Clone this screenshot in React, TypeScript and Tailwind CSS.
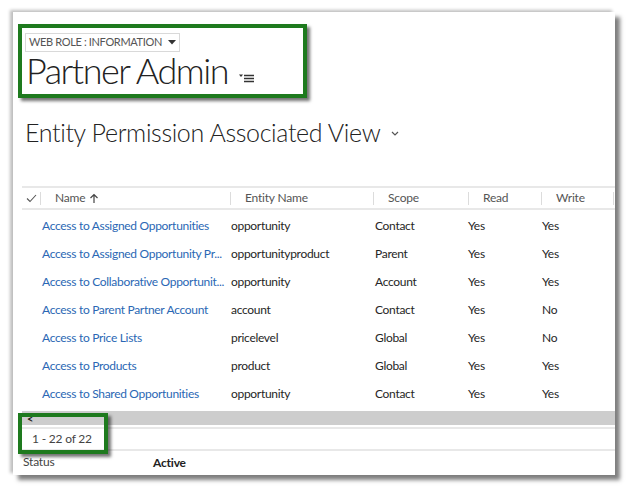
import React from "react";

const rows = [
  ["Access to Assigned Opportunities", "opportunity", "Contact", "Yes", "Yes"],
  ["Access to Assigned Opportunity Pr...", "opportunityproduct", "Parent", "Yes", "Yes"],
  ["Access to Collaborative Opportunit...", "opportunity", "Account", "Yes", "Yes"],
  ["Access to Parent Partner Account", "account", "Contact", "Yes", "No"],
  ["Access to Price Lists", "pricelevel", "Global", "Yes", "No"],
  ["Access to Products", "product", "Global", "Yes", "Yes"],
  ["Access to Shared Opportunities", "opportunity", "Contact", "Yes", "Yes"],
];

const grid = "grid grid-cols-[18px_190px_143px_95px_73px_72px_60px]";

function HeadCell({ label, arrow }: { label: string; arrow?: boolean }) {
  return (
    <div className="flex items-center h-full">
      <div className="w-px h-[13px] bg-[#dcdcdc]" />
      <span className="ml-[14px] text-[12px] tracking-[-0.2px] text-[#555]">{label}</span>
      {arrow && (
        <svg width="10" height="11" viewBox="0 0 10 11" className="ml-[4px]">
          <path d="M5 10V1.5M1.5 5L5 1.5L8.5 5" stroke="#444" strokeWidth="1.2" fill="none" />
        </svg>
      )}
    </div>
  );
}

export default function App() {
  return (
    <div
      className="w-[628px] h-[487px] bg-white overflow-hidden pt-[12px] pl-[13px]"
      style={{ fontFamily: "Lato, 'Open Sans', sans-serif" }}
    >
      <div className="relative w-[602px] h-[463px] bg-white overflow-hidden shadow-[5px_5px_4px_rgba(0,0,0,0.5),-3px_-2px_3px_rgba(0,0,0,0.25)]">
        {/* Header box */}
        <div className="ml-[5px] mt-[12px] w-[289px] h-[74px] border-[4px] border-[#1e7a1e] shadow-[3px_3px_3px_rgba(0,0,0,0.55)] pl-[3px] pt-[5px]">
          <div className="flex items-center w-[155px] h-[19px] border border-[#d9d9d9] pl-[3px] whitespace-nowrap">
            <span className="text-[11px] text-[#555] tracking-[-0.35px]">WEB ROLE : INFORMATION</span>
            <svg width="8" height="5" viewBox="0 0 8 5" className="ml-[6px] shrink-0">
              <path d="M0 0H8L4 4.5Z" fill="#333" />
            </svg>
          </div>
          <div className="flex items-end h-[36px] pl-[1px]">
            <span className="text-[36px] leading-[36px] font-light text-[#222] tracking-[-1.5px]">
              Partner Admin
            </span>
            <svg width="15" height="10" viewBox="0 0 15 10" className="ml-[11px] mb-[4px]">
              <path d="M0 0.5H4L2 3Z" fill="#333" />
              <path d="M5 1.5H15M5 4.5H15M5 7.5H15" stroke="#333" strokeWidth="1.4" />
            </svg>
          </div>
        </div>

        {/* View title */}
        <div className="flex items-center ml-[12px] mt-[21px] h-[26px]">
          <span className="text-[25px] leading-[26px] font-light text-[#222] tracking-[-0.35px]">
            Entity Permission Associated View
          </span>
          <svg width="8" height="5" viewBox="0 0 8 5" className="ml-[11px] mt-[2px]">
            <path d="M1 1L4 4L7 1" stroke="#555" strokeWidth="1.2" fill="none" />
          </svg>
        </div>

        {/* Table */}
        <div className="ml-[9px] mt-[41px] w-[620px]">
          <div className={`${grid} h-[24px] border-t-2 border-b-2 border-[#e8e8e8]`}>
            <div className="flex items-center justify-center">
              <svg width="11" height="9" viewBox="0 0 11 9">
                <path d="M1 4.5L4 7.5L10 1" stroke="#555" strokeWidth="1.1" fill="none" />
              </svg>
            </div>
            <HeadCell label="Name" arrow />
            <HeadCell label="Entity Name" />
            <HeadCell label="Scope" />
            <HeadCell label="Read" />
            <HeadCell label="Write" />
            <HeadCell label="" />
          </div>
          {rows.map((r, i) => (
            <div
              key={i}
              className={`${grid} h-[28px] pt-[3px] items-center text-[12px] tracking-[-0.3px] text-[#262626]`}
            >
              <div />
              <div className="pl-[2px] text-[#2a67b4] whitespace-nowrap overflow-hidden">{r[0]}</div>
              <div className="pl-[1px]">{r[1]}</div>
              <div className="pl-[2px]">{r[2]}</div>
              <div>{r[3]}</div>
              <div className="pl-[1px]">{r[4]}</div>
              <div />
            </div>
          ))}
          <div className="mt-[5px] h-[14px] bg-[#cdcdcd] flex items-center">
            <span className="ml-[5px] text-[11px] leading-none text-[#222] font-bold">&lt;</span>
          </div>
          <div className="mt-[2px] h-[24px] border-t-2 border-b-2 border-[#e8e8e8] flex items-center">
            <span className="ml-[10px] text-[12px] tracking-[-0.2px] text-[#444]">1 - 22 of 22</span>
          </div>
          <div className="flex items-center h-[24px] text-[12px] tracking-[-0.2px]">
            <span className="w-[130px] ml-[1px] text-[#444] -mt-[2px]">Status</span>
            <span className="font-bold text-[#222]">Active</span>
          </div>
        </div>

        {/* Annotation box */}
        <div className="absolute left-[5px] top-[401px] w-[90px] h-[41px] border-[4px] border-[#1e7a1e] shadow-[3px_3px_3px_rgba(0,0,0,0.55)]" />
      </div>
    </div>
  );
}
